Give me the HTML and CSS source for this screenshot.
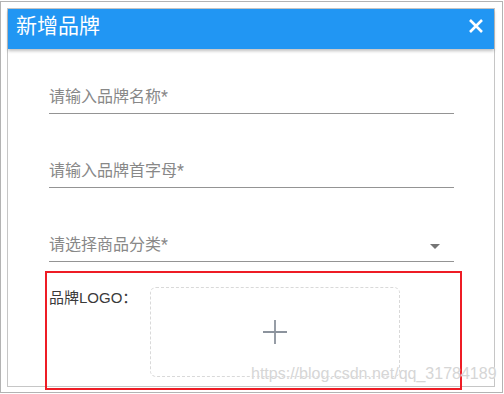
FILE: index.html
```html
<!DOCTYPE html>
<html lang="zh-CN">
<head>
  <meta charset="UTF-8" />
  <meta name="viewport" content="width=device-width, initial-scale=1.0">
  <title>新增品牌</title>
  <link rel="stylesheet" href="styles.css">
</head>
<body>

  <div class="frame">
    <div class="dialog">
      <header class="dialog-header">
        <span class="dialog-title">新增品牌</span>
        <svg class="close-btn" width="14" height="14" viewBox="0 0 14 14">
          <path d="M1 1 L13 13 M13 1 L1 13" stroke="#fff" stroke-width="2.6" fill="none" />
        </svg>
      </header>

      <section class="dialog-body">
        <div class="field">
          <span class="placeholder">请输入品牌名称*</span>
        </div>
        <div class="field">
          <span class="placeholder">请输入品牌首字母*</span>
        </div>
        <div class="field field-select">
          <span class="placeholder">请选择商品分类*</span>
          <svg class="drop-arrow" width="10" height="5" viewBox="0 0 10 5">
            <path d="M0 0 L10 0 L5 5 Z" fill="#757575" />
          </svg>
        </div>

        <!-- logo upload -->
        <div class="logo-row">
          <label class="logo-label">品牌LOGO：</label>
          <div class="uploader">
            <svg width="24" height="24" viewBox="0 0 24 24">
              <path d="M12 0 V24 M0 12 H24" stroke="#8c939d" stroke-width="1.8" fill="none" />
            </svg>
          </div>
        </div>
      </section>
    </div>
  </div>

  <div class="mark-box"></div>
  <div class="watermark">https://blog.csdn.net/qq_31784189</div>

</body>
</html>
```

FILE: styles.css
```css
* {
  box-sizing: border-box;
}

body {
  margin: 0;
  background: #fff;
  font-family: Roboto, "Noto Sans CJK SC", sans-serif;
  position: relative;
  width: 504px;
  height: 394px;
  overflow: hidden;
}

.frame {
  width: 503px;
  height: 392px;
  margin-top: 1px;
  border: 1px solid #b3b3b3;
  padding: 6px 7px 5px 6px;
  display: flex;
}

.dialog {
  flex: 1;
  border: 1px solid #c6c6c6;
  display: flex;
  flex-direction: column;
  background: #fff;
}

.dialog-header {
  height: 40px;
  background: #2196f3;
  display: flex;
  align-items: center;
  justify-content: space-between;
  padding: 0 11px 7px 8px;
  box-shadow: 0 2px 3px rgba(0, 0, 0, 0.25);
  position: relative;
  z-index: 1;
}

.dialog-title {
  color: #fff;
  font-size: 21px;
  line-height: 26px;
}

.close-btn {
  display: block;
}

.dialog-body {
  padding: 32px 40px 0 41px;
  display: flex;
  flex-direction: column;
}

.field {
  height: 33px;
  line-height: 32px;
  border-bottom: 1px solid #949494;
  font-size: 16px;
  margin-bottom: 41px;
  display: flex;
  align-items: center;
}

.field-select {
  margin-bottom: 25px;
  justify-content: space-between;
}

.placeholder {
  color: #888;
}

.drop-arrow {
  margin: 3px 14px 0 0;
}

.logo-row {
  display: flex;
  align-items: flex-start;
}

.logo-label {
  width: 101px;
  font-family: "Liberation Sans", "Noto Sans CJK SC", sans-serif;
  font-size: 15px;
  line-height: 22px;
  color: #3a3a3a;
}

.uploader {
  width: 250px;
  height: 90px;
  border: 1px dashed #d9d9d9;
  border-radius: 6px;
  display: flex;
  align-items: center;
  justify-content: center;
}

.mark-box {
  position: absolute;
  left: 45px;
  top: 271px;
  width: 417px;
  height: 119px;
  border: 2px solid #ee1c25;
}

.watermark {
  position: absolute;
  left: 251px;
  top: 366px;
  font-family: "Liberation Sans", sans-serif;
  font-size: 16px;
  line-height: 16px;
  color: #d6d6d6;
  text-shadow: 0 0 1px #fff;
  white-space: nowrap;
}
```
